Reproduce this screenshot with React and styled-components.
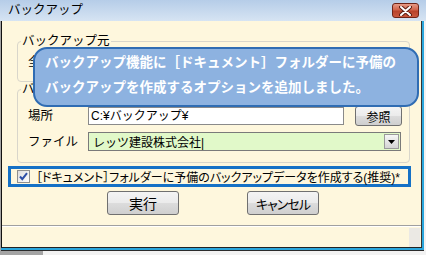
import React from "react";
import styled, { createGlobalStyle } from "styled-components";

const GlobalStyle = createGlobalStyle`
  html, body { margin: 0; padding: 0; }
  body {
    width: 426px; height: 255px; overflow: hidden;
    font-family: "Liberation Sans", "Noto Sans CJK JP", sans-serif;
  }
  * { box-sizing: border-box; }
`;

const Root = styled.div`
  position: relative;
  width: 426px;
  height: 255px;
  overflow: hidden;
  background: linear-gradient(to right, #a4a4a4 43px, #f2f2f2 43px);
`;

const TitleBar = styled.div`
  height: 21px;
  display: flex;
  align-items: flex-start;
  justify-content: space-between;
  padding: 3px 7px 0 8px;
  background: linear-gradient(#b6cde8, #d6e4f3);
`;

const Title = styled.span`
  font-size: 12.5px;
  line-height: 15px;
  color: #000;
`;

const CloseButton = styled.div`
  width: 27px;
  height: 15px;
  border: 1px solid #6e2418;
  border-radius: 3px;
  background: linear-gradient(#e69a86 0%, #d1634a 45%, #b8432b 55%, #c9583e 100%);
  display: flex;
  align-items: center;
  justify-content: center;
`;

const Frame = styled.div`
  margin-left: 1px;
  width: 423px;
  border-right: 2px solid #2aa6dc;
  border-bottom: 2px solid #2aa6dc;
  box-shadow: 0 1px 0 #2b2b2b;
`;

const Body = styled.div`
  height: 227px;
  border-left: 1px solid #111;
  border-right: 1px solid #333;
  border-bottom: 1px solid #222;
  background: #fef7dd;
  display: flex;
  flex-direction: column;
  padding-top: 13px;
`;

const Group = styled.fieldset`
  margin: 0 11px 0 15px;
  padding: ${(p) => p.$pad};
  border: 1px solid #d9d6cb;
  border-radius: 4px;
  min-width: 0;
  display: flex;
  flex-direction: column;
  gap: 6px;
`;

const Legend = styled.legend`
  margin-left: 3px;
  padding: 0 1px;
  font-size: 12.5px;
  line-height: 14px;
  color: #000;
`;

const Row = styled.div`
  display: flex;
  align-items: center;
  height: ${(p) => p.$h}px;
  padding-left: 10px;
`;

const Label = styled.span`
  width: 60px;
  font-size: 12.5px;
  line-height: 16px;
  color: #000;
`;

const TextInput = styled.div`
  width: 256px;
  height: 18px;
  border: 1px solid #8a8a8a;
  background: #fff;
  font-size: 12px;
  line-height: 16px;
  padding-left: 2px;
  color: #000;
`;

const Combo = styled.div`
  width: 313px;
  height: 19px;
  border: 1px solid #7a7a7a;
  background: #e1f9c9;
  display: flex;
  align-items: center;
  justify-content: space-between;
  padding: 0 1px 0 4px;
  font-size: 12px;
  color: #000;
`;

const ArrowBox = styled.div`
  width: 15px;
  height: 15px;
  border: 1px solid #9a9a9a;
  background: linear-gradient(#f6f6f6, #d4d4d4);
  display: flex;
  align-items: center;
  justify-content: center;
`;

const Button = styled.div`
  width: ${(p) => p.$w}px;
  height: ${(p) => p.$h}px;
  margin-left: ${(p) => p.$ml || 0}px;
  border: 1px solid #707070;
  border-radius: 3px;
  background: linear-gradient(#f4f4f4 0%, #ebebeb 48%, #dcdcdc 52%, #cfcfcf 100%);
  display: flex;
  align-items: center;
  justify-content: center;
  font-size: ${(p) => p.$fs}px;
  font-feature-settings: "palt";
  letter-spacing: ${(p) => p.$ls || 0}px;
  color: #000;
`;

const CheckRow = styled.div`
  margin: 3px 0 0 6px;
  width: 403px;
  height: 21px;
  border: 3px solid #1571c6;
  display: flex;
  align-items: center;
  padding-left: 6px;
  gap: 6px;
  font-size: 12px;
  font-feature-settings: "palt";
  color: #000;
  white-space: nowrap;
`;

const ButtonRow = styled.div`
  display: flex;
  margin-top: 4px;
  padding-left: 105px;
  gap: 68px;
`;

const Separator = styled.div`
  margin-top: 10px;
  border-top: 1px solid #a0a0a0;
  border-bottom: 1px solid #ffffff;
`;

const Status = styled.div`
  flex: 1;
  display: flex;
  justify-content: flex-end;
  padding: 1px 1px 0 0;
`;

const Grip = styled.div`
  width: 11px;
  background: #ebe9e4;
`;

const Balloon = styled.div`
  position: absolute;
  left: 33px;
  top: 47px;
  width: 386px;
  height: 60px;
  border: 2px solid #2f6cb3;
  border-radius: 14px;
  background: #8db2e0;
  color: #fff;
  padding: 0 0 0 10px;
  font-family: "Noto Sans CJK JP", sans-serif;
  font-weight: 700;
  font-size: 13.5px;
  line-height: 25px;
  white-space: nowrap;
`;

const CheckIcon = () => (
  <svg width="13" height="13" viewBox="0 0 13 13">
    <defs>
      <linearGradient id="cb" x1="0" y1="0" x2="1" y2="1">
        <stop offset="0" stopColor="#dcdcdc" />
        <stop offset="1" stopColor="#ffffff" />
      </linearGradient>
    </defs>
    <rect x="0.5" y="0.5" width="12" height="12" fill="url(#cb)" stroke="#8e8f8f" />
    <path d="M3 6.5 L5.3 9.2 L10 3.2" fill="none" stroke="#2c4ea6" strokeWidth="2" />
  </svg>
);

export default function App() {
  return (
    <Root>
      <GlobalStyle />
      <TitleBar>
        <Title>バックアップ</Title>
        <CloseButton>
          <svg width="13" height="10" viewBox="0 0 13 10">
            <path d="M2 1 L11 9 M11 1 L2 9" stroke="#5a1d12" strokeWidth="4" strokeLinecap="round" />
            <path d="M2 1 L11 9 M11 1 L2 9" stroke="#ffffff" strokeWidth="2" strokeLinecap="round" />
          </svg>
        </CloseButton>
      </TitleBar>
      <Frame>
        <Body>
          <Group $pad="6px 0 11px 0">
            <Legend>バックアップ元</Legend>
            <Row $h={16}>
              <Label>全</Label>
            </Row>
          </Group>
          <Group $pad="10px 0 11px 0">
            <Legend>バ</Legend>
            <Row $h={20}>
              <Label>場所</Label>
              <TextInput>C:¥バックアップ¥</TextInput>
              <Button $w={47} $h={20} $ml={11} $fs={12}>参照</Button>
            </Row>
            <Row $h={19}>
              <Label>ファイル</Label>
              <Combo>
                <span>レッツ建設株式会社|</span>
                <ArrowBox>
                  <svg width="7" height="4" viewBox="0 0 7 4">
                    <path d="M0 0 L7 0 L3.5 4 Z" fill="#000" />
                  </svg>
                </ArrowBox>
              </Combo>
            </Row>
          </Group>
          <CheckRow>
            <CheckIcon />
            <span>［ドキュメント］フォルダーに予備のバックアップデータを作成する(推奨)*</span>
          </CheckRow>
          <ButtonRow>
            <Button $w={72} $h={24} $fs={14}>実行</Button>
            <Button $w={72} $h={24} $fs={13} $ls={-1}>キャンセル</Button>
          </ButtonRow>
          <Separator />
          <Status>
            <Grip />
          </Status>
        </Body>
      </Frame>
      <Balloon>
        バックアップ機能に［ドキュメント］フォルダーに予備の
        <br />
        バックアップを作成するオプションを追加しました。
      </Balloon>
    </Root>
  );
}
